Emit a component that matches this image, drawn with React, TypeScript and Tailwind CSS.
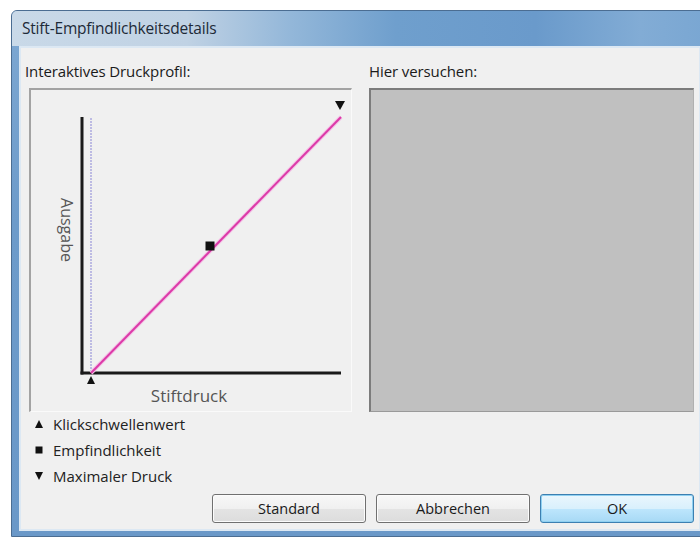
import React from "react";

function Marker({ kind }: { kind: "up" | "square" | "down" }) {
  return (
    <svg width="10" height="10" viewBox="0 0 10 10" className="shrink-0">
      {kind === "up" && <polygon points="1,9 9,9 5,1" fill="#111" />}
      {kind === "square" && <rect x="1.5" y="1.5" width="7" height="7" fill="#111" />}
      {kind === "down" && <polygon points="1,1 9,1 5,9" fill="#111" />}
    </svg>
  );
}

function PressureChart() {
  return (
    <svg width="321" height="322" viewBox="0 0 321 322" className="block">
      {/* click threshold guide */}
      <line x1="60" y1="28" x2="60" y2="283" stroke="#8a86d6" strokeWidth="1" strokeDasharray="2 1" />
      {/* axes */}
      <line x1="51" y1="27" x2="51" y2="284.5" stroke="#1a1a1a" strokeWidth="3" />
      <line x1="49.5" y1="283" x2="310" y2="283" stroke="#1a1a1a" strokeWidth="3" />
      {/* pressure curve */}
      <line x1="60" y1="283" x2="310" y2="27" stroke="#f3c2e6" strokeWidth="4" />
      <line x1="60" y1="283" x2="310" y2="27" stroke="#dc3aa8" strokeWidth="2" />
      {/* handles */}
      <polygon points="304,11 314,11 309,20" fill="#111" />
      <rect x="174.5" y="151.5" width="9" height="9" fill="#111" />
      <polygon points="56,294 64,294 60,286" fill="#111" />
      <text
        x="34"
        y="140"
        transform="rotate(90 34 140)"
        textAnchor="middle"
        dominantBaseline="middle"
        fontSize="16"
        fill="#555"
        fontFamily="'Open Sans', sans-serif"
      >
        Ausgabe
      </text>
      <text
        x="158"
        y="307"
        textAnchor="middle"
        dominantBaseline="middle"
        fontSize="17"
        fill="#555"
        fontFamily="'Open Sans', sans-serif"
      >
        Stiftdruck
      </text>
    </svg>
  );
}

const button =
  "w-[154px] h-[29px] rounded-[3px] border border-[#707070] bg-[linear-gradient(#f8f8f8,#f0f0f0_50%,#e4e4e4_50%,#dcdcdc)] shadow-[inset_0_0_0_1px_#fcfcfc] text-[14.5px] text-[#1a1a1a] flex items-center justify-center";

export default function App() {
  return (
    <div className="w-[700px] h-[537px] bg-white overflow-hidden pt-[10px] pl-[11px] font-['Open_Sans',sans-serif]">
      <div className="w-[700px] h-[527px] flex flex-col rounded-tl-[6px] border border-[#4b6d92] bg-[linear-gradient(180deg,#7ea8d2,#6d9bca_40%,#6a98c8)]">
        {/* title bar */}
        <div className="h-[35px] flex items-center pl-[10px] rounded-tl-[5px] bg-[linear-gradient(90deg,#c9d9e8_0%,#c0d2e4_25%,#93b7d9_40%,#6f9fcd_55%,#6a9acb_75%,#82acd5_90%,#79a6d2_100%)]">
          <span className="text-[15.5px] text-[#1d2a38] tracking-[-0.2px]">Stift-Empfindlichkeitsdetails</span>
        </div>

        {/* client area */}
        <div className="flex-1 ml-[7px] mr-[9px] mb-[5px] border-2 border-[#dce8f3] bg-[#f0f0f0] flex flex-col pl-[4px] pr-[5px] pt-[13px]">
          <div className="flex">
            <div className="w-[327px] flex flex-col">
              <div className="h-[20px] text-[15px] leading-[20px] text-[#1a1a1a] tracking-[-0.1px]">Interaktives Druckprofil:</div>
              <div className="mt-[7px] ml-[4px] w-[323px] h-[324px] border-t-2 border-l-2 border-[#a3a3a3] border-b border-r border-b-[#fafafa] border-r-[#fafafa] bg-[#f0f0f0]">
                <PressureChart />
              </div>
            </div>
            <div className="ml-[17px] flex-1 flex flex-col">
              <div className="h-[20px] text-[15px] leading-[20px] text-[#1a1a1a] tracking-[-0.1px]">Hier versuchen:</div>
              <div className="mt-[7px] h-[324px] border-t-2 border-l-2 border-[#7c7c7c] border-b border-r border-b-[#9a9a9a] border-r-[#b0b0b0] bg-[#c0c0c0]" />
            </div>
          </div>

          {/* legend */}
          <div className="flex flex-col pl-[9px] -mt-px">
            <div className="h-[26px] flex items-center gap-[9px] text-[15px] text-[#222]">
              <Marker kind="up" />
              <span>Klickschwellenwert</span>
            </div>
            <div className="h-[26px] flex items-center gap-[9px] text-[15px] text-[#222]">
              <Marker kind="square" />
              <span>Empfindlichkeit</span>
            </div>
            <div className="h-[26px] flex items-center gap-[9px] text-[15px] text-[#222]">
              <Marker kind="down" />
              <span>Maximaler Druck</span>
            </div>
          </div>

          {/* dialog buttons */}
          <div className="mt-[5px] flex justify-end gap-[10px]">
            <button className={button}>Standard</button>
            <button className={button}>Abbrechen</button>
            <button className="w-[154px] h-[29px] rounded-[3px] border border-[#3c7fb1] bg-[linear-gradient(#eaf6fd,#d9f0fc_50%,#bee6fd_50%,#a7d9f5)] shadow-[inset_0_0_0_1px_#8fd0f1] text-[14.5px] text-[#1a1a1a] flex items-center justify-center">
              OK
            </button>
          </div>
        </div>
      </div>
    </div>
  );
}
